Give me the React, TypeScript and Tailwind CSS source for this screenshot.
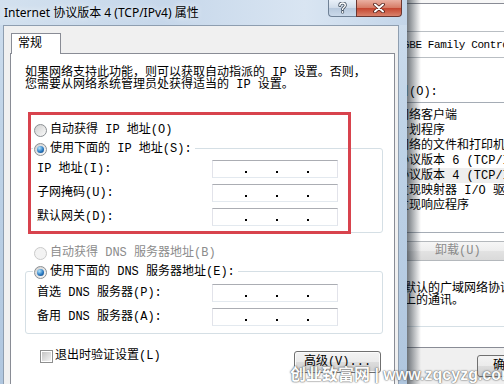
import clsx from "clsx"

const Radio = ({ checked, disabled }: { checked?: boolean; disabled?: boolean }) => (
    <span
        className={clsx(
            "flex h-[13px] w-[13px] shrink-0 items-center justify-center rounded-full border",
            disabled
                ? "border-[#cacaca] bg-[#f3f3f3]"
                : "border-[#8b8f93] bg-[linear-gradient(135deg,#cfcfcf,#fbfbfb)]"
        )}
    >
        {checked && (
            <span className="h-[7px] w-[7px] rounded-full bg-[radial-gradient(circle_at_35%_30%,#b3e6fd,#2b7bc4_55%,#0e3c70)]" />
        )}
    </span>
)

const IpField = () => (
    <div className="flex h-[18px] w-[126px] shrink-0 items-end gap-[29px] border border-[#abadb3] border-x-[#e2e3ea] border-b-[#e3e9ef] bg-white pb-[4px] pl-[32px]">
        <i className="h-[2px] w-[2px] bg-black" />
        <i className="h-[2px] w-[2px] bg-black" />
        <i className="h-[2px] w-[2px] bg-black" />
    </div>
)

const FieldRow = ({ label }: { label: string }) => (
    <div className="flex items-center">
        <span className="w-[175px] whitespace-nowrap">{label}</span>
        <IpField />
    </div>
)

const listItems = [
    "网络客户端",
    "计划程序",
    "网络的文件和打印机共享",
    "协议版本 6 (TCP/IPv6)",
    "协议版本 4 (TCP/IPv4)",
    "发现映射器 I/O 驱动程序",
    "发现响应程序",
]

export default function App() {
    return (
        <div className="relative flex h-[384px] w-[504px] items-start overflow-hidden bg-[#f0f0f0] font-['Liberation_Mono','Noto_Sans_CJK_SC',monospace] text-[12px] leading-[12px] text-black">
            {/* dialog */}
            <div className="flex h-[410px] w-[407px] shrink-0 flex-col bg-[linear-gradient(180deg,#cfdeee,#c0d4e8_30%,#aec5de)] pl-[3px] pr-[8px]">
                <div className="-ml-[3px] -mr-[8px] flex h-[25px] shrink-0 items-start justify-between bg-[linear-gradient(90deg,#d3e1ef,#c6d7ea_40%,#d9e5f2_75%,#c3d5e9)] pl-[4px] pr-[5px]">
                    <span className="mt-[6px] whitespace-nowrap font-['Noto_Sans','Noto_Sans_CJK_SC',sans-serif] text-[12px] leading-[13px] [text-shadow:0_0_6px_#ffffff]">
                        Internet 协议版本 4 (TCP/IPv4) 属性
                    </span>
                    <div className="flex h-[17px]">
                        <div className="flex w-[28px] items-center justify-center rounded-bl-[4px] border border-t-0 border-r-0 border-[#6f8196] bg-[linear-gradient(180deg,#e9f0f8,#cfdbe9_50%,#b7c8dc_51%,#cad9ea)]">
                            <svg width="9" height="12" viewBox="0 0 9 12">
                                <g fill="none" strokeLinecap="round">
                                    <path d="M1.8 3.6C1.8 1.8 3 1 4.5 1S7.3 1.9 7.3 3.3C7.3 5.2 4.6 5.3 4.6 7.4" stroke="#3d4a5a" strokeWidth="3" />
                                    <path d="M1.8 3.6C1.8 1.8 3 1 4.5 1S7.3 1.9 7.3 3.3C7.3 5.2 4.6 5.3 4.6 7.4" stroke="#fff" strokeWidth="1.4" />
                                </g>
                                <circle cx="4.6" cy="10" r="1.6" fill="#3d4a5a" />
                                <circle cx="4.6" cy="10" r="0.9" fill="#fff" />
                            </svg>
                        </div>
                        <div className="flex w-[46px] items-center justify-center rounded-br-[4px] border border-t-0 border-[#6b3630] bg-[linear-gradient(180deg,#eab0a2,#d67a64_50%,#c4452f_51%,#d9826c)]">
                            <svg width="12" height="10" viewBox="0 0 12 10">
                                <g strokeLinecap="round">
                                    <path d="M2 1.5L10 8.5M10 1.5L2 8.5" stroke="#4a1a14" strokeWidth="3.6" />
                                    <path d="M2 1.5L10 8.5M10 1.5L2 8.5" stroke="#fff" strokeWidth="2" />
                                </g>
                            </svg>
                        </div>
                    </div>
                </div>

                <div className="flex flex-1 flex-col border border-[#8e9eb0] bg-[#f0f0f0] pl-[6px] pr-[3px] pt-[7px]">
                    <div className="relative z-10 -mb-px ml-[1px] flex h-[21px] w-[50px] items-center border border-b-0 border-[#898c95] bg-white pl-[6px]">
                        常规
                    </div>
                    <div className="relative flex flex-1 flex-col border border-[#898c95] bg-white pl-[14px] pr-[11px]">
                        <div className="mt-[13px] whitespace-nowrap">
                            <div>如果网络支持此功能，则可以获取自动指派的 IP 设置。否则，</div>
                            <div>您需要从网络系统管理员处获得适当的 IP 设置。</div>
                        </div>

                        <div className="mt-[30px] flex h-[18px] items-center gap-[3px] pl-[9px]">
                            <Radio />
                            <span>自动获得 IP 地址(O)</span>
                        </div>

                        <div className="ml-[4px] mt-[9px] flex flex-col rounded-[3px] border border-[#d5dfe5] pb-[6px]">
                            <div className="-mt-[9px] ml-[3px] flex h-[18px] w-fit items-center gap-[3px] bg-white pl-[1px] pr-[3px]">
                                <Radio checked />
                                <span>使用下面的 IP 地址(S):</span>
                            </div>
                            <div className="mt-[2px] flex flex-col gap-[6px] pl-[7px]">
                                <FieldRow label="IP 地址(I):" />
                                <FieldRow label="子网掩码(U):" />
                                <FieldRow label="默认网关(D):" />
                            </div>
                        </div>

                        <div className="mt-[11px] flex h-[18px] items-center gap-[3px] pl-[9px] text-[#8c8c8c]">
                            <Radio disabled />
                            <span>自动获得 DNS 服务器地址(B)</span>
                        </div>

                        <div className="mt-[9px] flex flex-col rounded-[3px] border border-[#d5dfe5] pb-[7px]">
                            <div className="-mt-[9px] ml-[7px] flex h-[18px] w-fit items-center gap-[3px] bg-white pl-[1px] pr-[3px]">
                                <Radio checked />
                                <span>使用下面的 DNS 服务器地址(E):</span>
                            </div>
                            <div className="mt-[3px] flex flex-col gap-[6px] pl-[11px]">
                                <FieldRow label="首选 DNS 服务器(P):" />
                                <FieldRow label="备用 DNS 服务器(A):" />
                            </div>
                        </div>

                        <div className="mt-[13px] flex items-start justify-between">
                            <div className="flex h-[18px] items-center gap-[2px] pl-[15px]">
                                <span className="flex h-[13px] w-[13px] items-center justify-center border border-[#8e8f8f] bg-white">
                                    <span className="h-[9px] w-[9px] bg-[linear-gradient(135deg,#c4c4c4,#f4f4f4)]" />
                                </span>
                                <span>退出时验证设置(L)</span>
                            </div>
                            <div className="mr-[2px] mt-[4px] flex h-[22px] w-[87px] items-center justify-center rounded-[3px] border border-[#707070] bg-[linear-gradient(180deg,#f3f3f3,#ebebeb_50%,#dddddd_51%,#cfcfcf)] shadow-[inset_0_0_0_1px_#fbfbfb]">
                                高级(V)...
                            </div>
                        </div>

                        {/* annotation */}
                        <div className="pointer-events-none absolute left-[17px] top-[58px] h-[122px] w-[323px] border-[3px] border-[#d8434d]" />
                    </div>
                </div>
            </div>

            {/* window behind */}
            <div className="relative flex h-[410px] flex-1 flex-col overflow-hidden bg-[#f0f0f0]">
                <div className="h-[3px] shrink-0 bg-[#f7f7f7]" />
                <div className="flex h-[345px] shrink-0 flex-col border-y border-[#898c95] bg-white">
                    <div className="mt-[27px] flex h-[27px] items-center whitespace-nowrap border-y border-[#b9bec3]">
                        <span className="-ml-[4px] text-[11px] tracking-[-0.4px]">GBE Family Controller</span>
                    </div>
                    <div className="mt-[28px] -ml-[10px] whitespace-nowrap">目(O):</div>
                    <div className="mt-[4px] flex flex-col border-y border-[#a5acb5] pb-[19px] pt-[5px]">
                        {listItems.map((item, i) => (
                            <div
                                key={item}
                                className={clsx(
                                    "flex h-[15px] items-center whitespace-nowrap",
                                    i === 4 && "bg-[#eeeeee]"
                                )}
                            >
                                <span className="-ml-[10px]">{item}</span>
                            </div>
                        ))}
                    </div>
                    <div className="mt-[8px] flex h-[20px] items-center border-y border-[#b4b8bc] bg-[linear-gradient(180deg,#f6f6f6,#ededed_50%,#e2e2e2_51%,#dadada)] pl-[28px] text-[#8a8a8a]">
                        卸载(U)
                    </div>
                    <div className="mt-[22px] -ml-[3px] whitespace-nowrap">
                        <div>默认的广域网络协议，它提供</div>
                        <div>上的通讯。</div>
                    </div>
                    <div className="mt-[19px] border-b border-[#d5dfe5]" />
                </div>
                <div className="ml-[70px] mt-[7px] flex h-[22px] w-[75px] items-center rounded-[3px] border border-[#707070] bg-[linear-gradient(180deg,#f3f3f3,#ebebeb_50%,#dddddd_51%,#cfcfcf)] pl-[15px]">
                    确定
                </div>
                <div className="pointer-events-none absolute left-0 top-0 h-full w-[14px] bg-gradient-to-r from-[rgba(20,30,40,0.6)] to-transparent" />
            </div>

            {/* watermark */}
            <div className="pointer-events-none absolute left-[290px] top-[366px] whitespace-nowrap font-['Liberation_Sans','Noto_Sans_CJK_SC',sans-serif] text-[16px] font-bold leading-[17px] text-white opacity-90 [text-shadow:0_0_2px_#505050,0_0_1px_#303030]">
                创业致富网 | www.zqcyzg.com
            </div>
        </div>
    )
}
